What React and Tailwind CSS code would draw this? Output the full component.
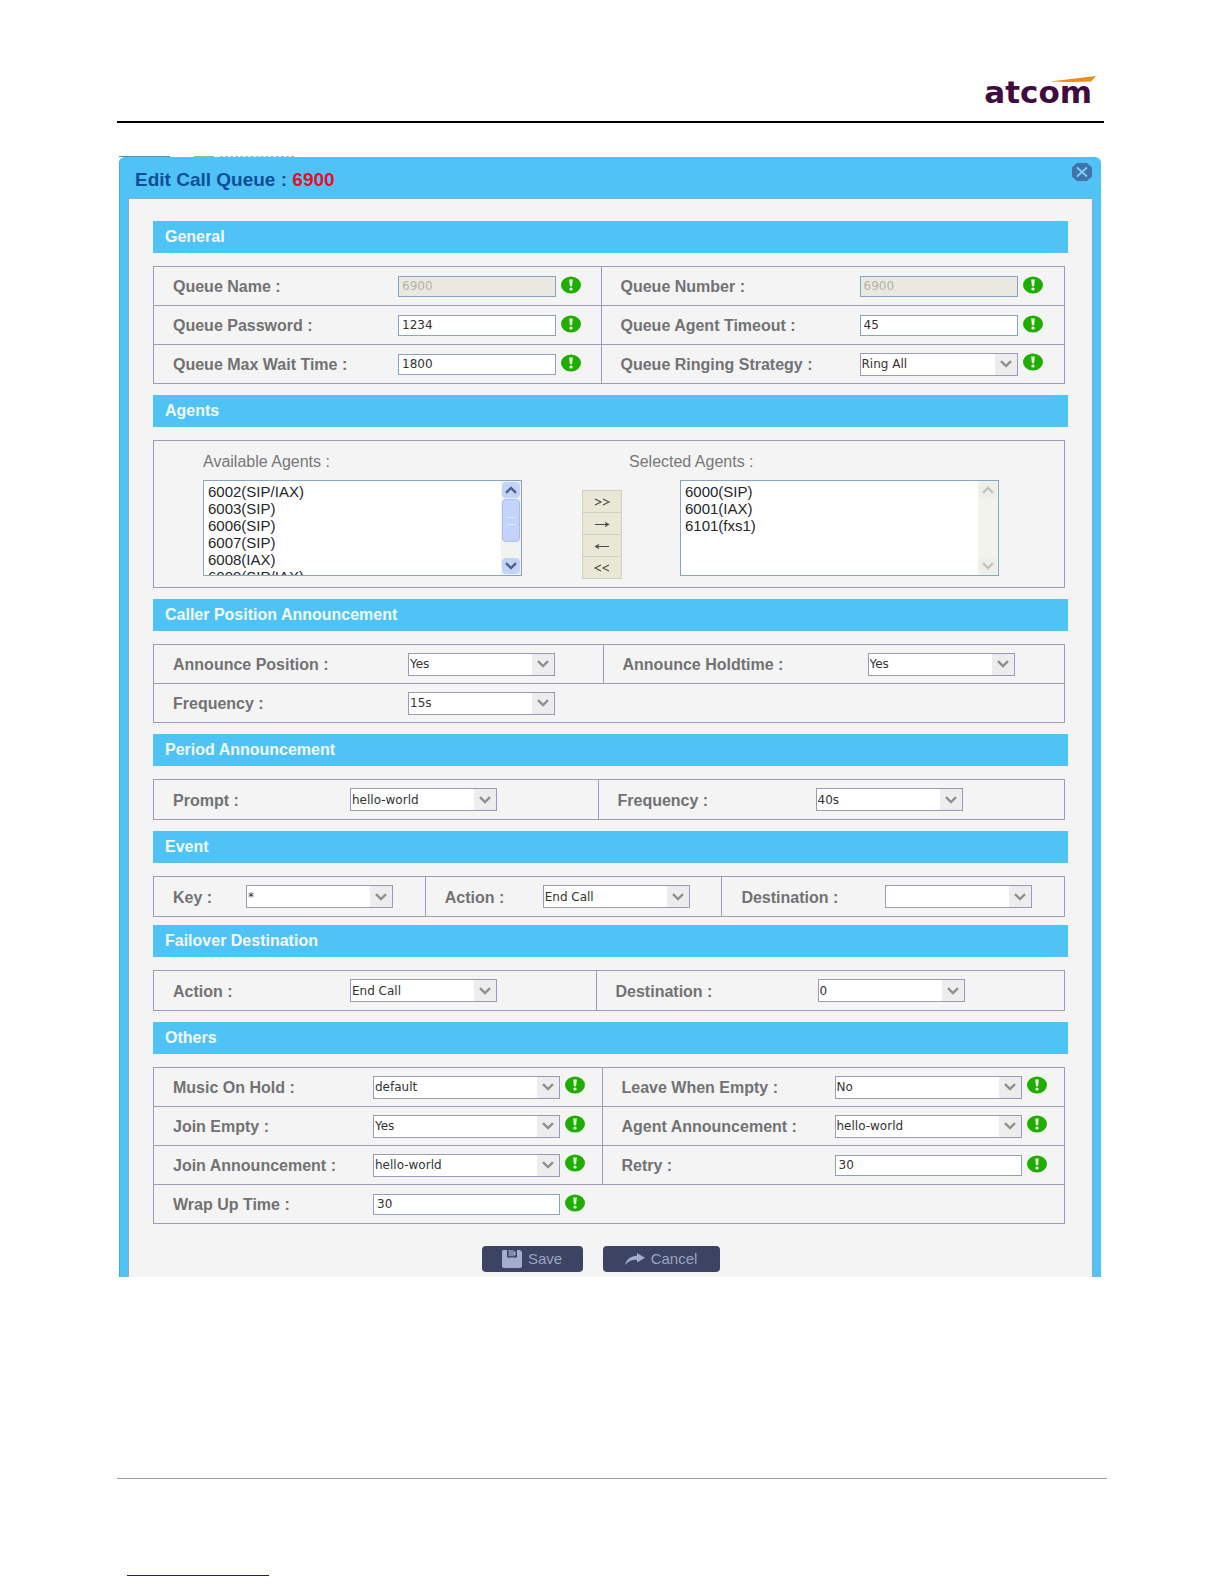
import { useState } from 'react'

const yesNo = ['Yes', 'No']
const prompts = ['hello-world', 'default']
const actions = ['End Call', 'Extension']

const availableAgents = [
  '6002(SIP/IAX)',
  '6003(SIP)',
  '6006(SIP)',
  '6007(SIP)',
  '6008(IAX)',
  '6009(SIP/IAX)'
]
const selectedAgents = ['6000(SIP)', '6001(IAX)', '6101(fxs1)']

function Logo() {
  return (
    <div className="relative">
      <span className="block font-['DejaVu_Sans',sans-serif] text-[31px] leading-none font-bold text-[#3f0b40]">
        atcom
      </span>
      <svg className="absolute -top-px -right-1 h-2 w-[46px]" viewBox="0 0 46 8" aria-hidden="true">
        <path d="M0 5.5 L46 0 L41 5.5 L18 6 Z" fill="#ee8a1d" />
      </svg>
    </div>
  )
}

function InfoIcon() {
  return (
    <svg className="h-[18px] w-5 shrink-0" viewBox="0 0 20 18" aria-hidden="true">
      <ellipse cx="10" cy="9" rx="10" ry="8.6" fill="#1fae00" />
      <path d="M8.2 3.4h3.6l-.7 6.8H8.900z" fill="#e9fbe4" />
      <ellipse cx="10" cy="12.9" rx="1.7" ry="1.5" fill="#e9fbe4" />
    </svg>
  )
}

function Chevron({ className }) {
  return (
    <svg className={className} viewBox="0 0 12 8" fill="none" strokeWidth="2.4" aria-hidden="true">
      <path d="M1 1.2 L6 6 L11 1.2" stroke="currentColor" />
    </svg>
  )
}

function TextBox({ id, value, disabled, width }) {
  const [text, setText] = useState(value)
  return (
    <input
      id={id}
      type="text"
      value={text}
      disabled={disabled}
      onChange={(e) => setText(e.target.value)}
      className={`h-[21px] border border-[#8aa3c2] bg-white px-[3px] font-['DejaVu_Sans',sans-serif] text-xs text-[#333] outline-none disabled:bg-[#e9e9e2] disabled:text-[#b4b3a6] ${width}`}
    />
  )
}

function SelectBox({ id, options, width }) {
  return (
    <div className={`relative h-[23px] border border-[#9a9ab9] bg-white ${width}`}>
      <select
        id={id}
        className="block h-full w-full appearance-none bg-transparent pr-6 pl-px font-['DejaVu_Sans',sans-serif] text-xs text-[#333] outline-none"
      >
        {options.map((option) => (
          <option key={option}>{option}</option>
        ))}
      </select>
      <span className="pointer-events-none absolute inset-y-0 right-0 flex w-[22px] items-center justify-center bg-[#ededed] text-[#8f8f8f]">
        <Chevron className="h-2 w-3" />
      </span>
    </div>
  )
}

function Field({ id, label, labelWidth, info, className = '', children }) {
  return (
    <div className={`flex items-center border-r border-b border-[#9b9db9] pl-[19px] ${className}`}>
      <label htmlFor={id} className={`mt-0.5 shrink-0 text-base leading-5 font-bold text-[#727275] ${labelWidth}`}>
        {label} :
      </label>
      <div className="flex items-start gap-[5px]">
        {children}
        {info && <InfoIcon />}
      </div>
    </div>
  )
}

function Section({ title, className = 'mb-[11px]', children }) {
  return (
    <section className={className}>
      <h2 className="h-8 bg-[#50c3f6] pl-3 text-base leading-8 font-bold text-[#f1faff]">{title}</h2>
      <div className="mt-[13px] mr-[3px]">{children}</div>
    </section>
  )
}

function AgentList({ id, agents, scrollable }) {
  const button = scrollable ? 'bg-[#c3d3fc] text-[#4d6185]' : 'bg-[#eeeee8] text-[#c3c3bd]'
  return (
    <div className="relative h-24 w-[319px] border border-[#8aa3c2] bg-white">
      <select
        id={id}
        multiple
        className="block h-full w-full overflow-y-auto bg-transparent pt-0.5 pr-5 text-[15px] text-[#26262b] outline-none [scrollbar-width:none]"
      >
        {agents.map((agent) => (
          <option key={agent} className="h-[17px] min-h-0 p-0 pl-1 leading-[17px]">
            {agent}
          </option>
        ))}
      </select>
      <div className="pointer-events-none absolute inset-y-0 right-0 flex w-5 flex-col bg-[#f3f3ee] p-px" aria-hidden="true">
        <span className={`flex h-4 items-center justify-center rounded-sm ${button}`}>
          <Chevron className="h-2 w-3 rotate-180" />
        </span>
        {scrollable && (
          <span className="mt-px flex h-[43px] items-center justify-center rounded-sm border border-[#a9bdf0] bg-[#c3d3fc]">
            <span className="h-2 w-2 border-y border-[#e6edff]" />
          </span>
        )}
        <span className={`mt-auto flex h-4 items-center justify-center rounded-sm ${button}`}>
          <Chevron className="h-2 w-3" />
        </span>
      </div>
    </div>
  )
}

function MoveButton({ label, children }) {
  return (
    <button
      type="button"
      aria-label={label}
      className="flex h-[22px] w-10 items-center justify-center border border-b-0 border-[#cfcfc3] bg-[#e9e8d6] text-[#4b4b45] last:h-[23px] last:border-b"
    >
      <svg className="h-2.5 w-5" viewBox="0 0 20 10" fill="none" stroke="currentColor" strokeWidth="1.1">
        {children}
      </svg>
    </button>
  )
}

export default function App() {
  return (
    <div className="bg-white px-[117px] pb-2 font-['Liberation_Sans',Arial,sans-serif]">
      <header className="mr-[3px] flex justify-end border-b-2 border-black pt-[77px] pr-3 pb-[13px]">
        <Logo />
      </header>

      <main className="mt-[33px] mr-1.5 ml-0.5">
        {/* Sliver of the page behind the dialog */}
        <div className="flex h-px">
          <div className="w-[51px] bg-[#5b8fae]" />
          <div className="ml-6 w-5 bg-[#7cc79a]" />
          <div className="ml-1.5 w-[74px] border-t border-dashed border-[#a5b8c4]" />
        </div>

        <form
          onSubmit={(e) => e.preventDefault()}
          className="rounded-t-md border-l border-[#45aed8] bg-[#50c3f6] pr-2 pl-2"
        >
          <div className="flex h-[41px] items-start justify-between">
            <h1 className="pt-[13px] pl-[7px] text-[19px] leading-5 font-bold text-[#0d4f96]">
              Edit Call Queue : <span className="text-[#e0122a]">6900</span>
            </h1>
            <button type="button" aria-label="Close" className="mt-1.5 mr-px">
              <svg className="h-[18px] w-5" viewBox="0 0 20 18">
                <path d="M5 0h10l5 4.5v9L15 18H5l-5-4.5v-9z" fill="#3f74ab" />
                <path d="M5 4.5l10 9M15 4.5l-10 9" stroke="#7fd0f5" strokeWidth="1.8" />
              </svg>
            </button>
          </div>

          <div className="border border-b-0 border-[#8fa6c9] bg-[#f4f4f4] pt-[22px] pr-6 pb-[5px] pl-6">
            <Section title="General">
              <div className="grid auto-rows-[39px] grid-cols-[448fr_464fr] border-t border-l border-[#9b9db9]">
                <Field id="queue-name" label="Queue Name" labelWidth="w-[225px]" info>
                  <TextBox id="queue-name" value="6900" disabled width="w-[158px]" />
                </Field>
                <Field id="queue-number" label="Queue Number" labelWidth="w-[239px]" info>
                  <TextBox id="queue-number" value="6900" disabled width="w-[158px]" />
                </Field>
                <Field id="queue-password" label="Queue Password" labelWidth="w-[225px]" info>
                  <TextBox id="queue-password" value="1234" width="w-[158px]" />
                </Field>
                <Field id="agent-timeout" label="Queue Agent Timeout" labelWidth="w-[239px]" info>
                  <TextBox id="agent-timeout" value="45" width="w-[158px]" />
                </Field>
                <Field id="max-wait" label="Queue Max Wait Time" labelWidth="w-[225px]" info>
                  <TextBox id="max-wait" value="1800" width="w-[158px]" />
                </Field>
                <Field id="strategy" label="Queue Ringing Strategy" labelWidth="w-[239px]" info>
                  <SelectBox id="strategy" options={['Ring All', 'Round Robin']} width="w-[158px]" />
                </Field>
              </div>
            </Section>

            <Section title="Agents">
              <div className="flex h-[148px] items-start border border-[#9b9db9] pt-[11px] pl-[49px]">
                <div>
                  <label htmlFor="available" className="block text-base leading-5 text-[#77777a]">
                    Available Agents :
                  </label>
                  <div className="mt-2">
                    <AgentList id="available" agents={availableAgents} scrollable />
                  </div>
                </div>
                <div className="mt-[38px] ml-[60px] flex flex-col">
                  <MoveButton label="Add all">
                    <path d="M3 2l6 3-6 3M11 2l6 3-6 3" />
                  </MoveButton>
                  <MoveButton label="Add">
                    <path d="M3 5.5h13M13 3.5l3.5 2-3.5 2" />
                  </MoveButton>
                  <MoveButton label="Remove">
                    <path d="M17 5.5H4M7 3.5l-3.5 2 3.5 2" />
                  </MoveButton>
                  <MoveButton label="Remove all">
                    <path d="M9 2L3 5l6 3M17 2l-6 3 6 3" />
                  </MoveButton>
                </div>
                <div className="ml-[7px]">
                  <label htmlFor="selected" className="block text-base leading-5 text-[#77777a]">
                    Selected Agents :
                  </label>
                  <div className="mt-2 ml-[51px]">
                    <AgentList id="selected" agents={selectedAgents} />
                  </div>
                </div>
              </div>
            </Section>

            <Section title="Caller Position Announcement">
              <div className="grid auto-rows-[39px] grid-cols-[450fr_462fr] border-t border-l border-[#9b9db9]">
                <Field id="position" label="Announce Position" labelWidth="w-[235px]">
                  <SelectBox id="position" options={yesNo} width="w-[147px]" />
                </Field>
                <Field id="holdtime" label="Announce Holdtime" labelWidth="w-[245px]">
                  <SelectBox id="holdtime" options={yesNo} width="w-[147px]" />
                </Field>
                <Field id="position-frequency" label="Frequency" labelWidth="w-[235px]" className="col-span-2">
                  <SelectBox id="position-frequency" options={['15s', '30s']} width="w-[147px]" />
                </Field>
              </div>
            </Section>

            <Section title="Period Announcement">
              <div className="grid auto-rows-[40px] grid-cols-[445fr_467fr] border-t border-l border-[#9b9db9]">
                <Field id="prompt" label="Prompt" labelWidth="w-[177px]">
                  <SelectBox id="prompt" options={prompts} width="w-[147px]" />
                </Field>
                <Field id="period-frequency" label="Frequency" labelWidth="w-[198px]">
                  <SelectBox id="period-frequency" options={['40s', '60s']} width="w-[147px]" />
                </Field>
              </div>
            </Section>

            <Section title="Event" className="mb-2">
              <div className="grid auto-rows-[40px] grid-cols-[272fr_297fr_343fr] border-t border-l border-[#9b9db9]">
                <Field id="key" label="Key" labelWidth="w-[73px]">
                  <SelectBox id="key" options={['*', '#']} width="w-[147px]" />
                </Field>
                <Field id="event-action" label="Action" labelWidth="w-[98px]">
                  <SelectBox id="event-action" options={actions} width="w-[147px]" />
                </Field>
                <Field id="event-destination" label="Destination" labelWidth="w-[144px]">
                  <SelectBox id="event-destination" options={['']} width="w-[147px]" />
                </Field>
              </div>
            </Section>

            <Section title="Failover Destination">
              <div className="grid auto-rows-[40px] grid-cols-[443fr_469fr] border-t border-l border-[#9b9db9]">
                <Field id="failover-action" label="Action" labelWidth="w-[177px]">
                  <SelectBox id="failover-action" options={actions} width="w-[147px]" />
                </Field>
                <Field id="failover-destination" label="Destination" labelWidth="w-[202px]">
                  <SelectBox id="failover-destination" options={['0']} width="w-[147px]" />
                </Field>
              </div>
            </Section>

            <Section title="Others" className="mb-[22px]">
              <div className="grid auto-rows-[39px] grid-cols-[449fr_463fr] border-t border-l border-[#9b9db9]">
                <Field id="music" label="Music On Hold" labelWidth="w-[200px]" info>
                  <SelectBox id="music" options={['default']} width="w-[187px]" />
                </Field>
                <Field id="leave-empty" label="Leave When Empty" labelWidth="w-[213px]" info>
                  <SelectBox id="leave-empty" options={['No', 'Yes']} width="w-[187px]" />
                </Field>
                <Field id="join-empty" label="Join Empty" labelWidth="w-[200px]" info>
                  <SelectBox id="join-empty" options={yesNo} width="w-[187px]" />
                </Field>
                <Field id="agent-announcement" label="Agent Announcement" labelWidth="w-[213px]" info>
                  <SelectBox id="agent-announcement" options={prompts} width="w-[187px]" />
                </Field>
                <Field id="join-announcement" label="Join Announcement" labelWidth="w-[200px]" info>
                  <SelectBox id="join-announcement" options={prompts} width="w-[187px]" />
                </Field>
                <Field id="retry" label="Retry" labelWidth="w-[213px]" info>
                  <TextBox id="retry" value="30" width="w-[187px]" />
                </Field>
                <Field id="wrap-up" label="Wrap Up Time" labelWidth="w-[200px]" info className="col-span-2">
                  <TextBox id="wrap-up" value="30" width="w-[187px]" />
                </Field>
              </div>
            </Section>

            <div className="flex justify-center gap-5 pr-5">
              <button
                type="submit"
                className="flex h-[26px] w-[101px] items-center justify-center gap-1.5 rounded-sm bg-[#3d4362] text-[15px] text-[#9aa4c6]"
              >
                <svg className="h-[18px] w-5" viewBox="0 0 20 18" aria-hidden="true">
                  <path d="M1 0h17l2 2v14.5L18.5 18h-17L0 16.5V1z" fill="#a3add0" />
                  <path d="M5 0h10v7.5H5z" fill="#3d4362" />
                  <path d="M6.5 0h5v6.2h-5z" fill="#7f88ab" />
                  <path d="M11.5 1.5h2v4h-2z" fill="#a3add0" />
                </svg>
                Save
              </button>
              <button
                type="button"
                className="flex h-[26px] w-[117px] items-center justify-center gap-1.5 rounded-sm bg-[#3d4362] text-[15px] text-[#9aa4c6]"
              >
                <svg className="h-3 w-5" viewBox="0 0 20 12" aria-hidden="true">
                  <path d="M12 0l8 4.8-8 4.7V6.8C7 6.6 3 8.5 0 12 1.5 6 6 3 12 2.8z" fill="#a3add0" />
                </svg>
                Cancel
              </button>
            </div>
          </div>
        </form>
      </main>

      <footer className="mt-[201px] border-t border-[#a0a0a0] pt-24 pl-2.5">
        <div className="w-[142px] border-t border-[#1c1a86]" />
      </footer>
    </div>
  )
}
